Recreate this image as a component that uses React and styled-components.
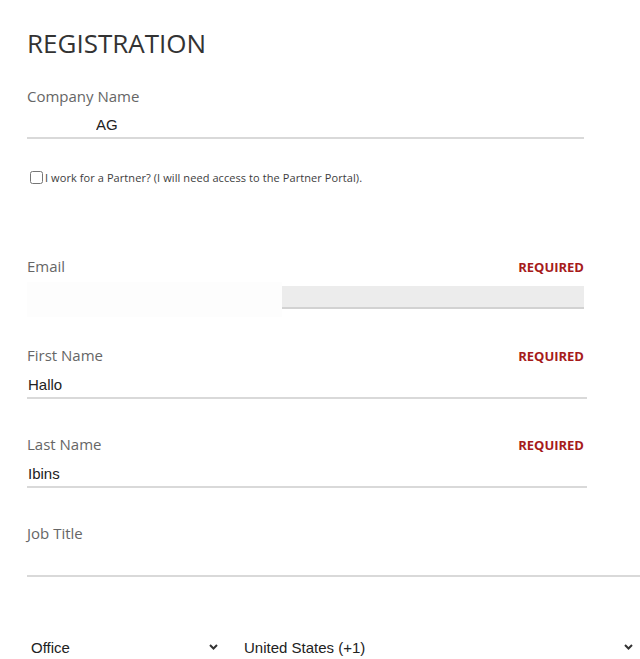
import styled, { createGlobalStyle } from "styled-components";

const GlobalStyle = createGlobalStyle`
  body {
    margin: 0;
    background: #fff;
    overflow: hidden;
  }
`;

const Chevron = () => (
  <svg width="9" height="6" viewBox="0 0 9 6">
    <polyline
      points="1,1 4.5,4.5 8,1"
      fill="none"
      stroke="#333"
      strokeWidth="2"
    />
  </svg>
);

const FormField = ({ label, required, value, width, gap, labelGap = 7, indent, filled, redact }) => {
  return (
    <Field $width={width} $gap={gap}>
      <LabelRow $gap={labelGap}>
        <Label>{label}</Label>
        {required && <Required>REQUIRED</Required>}
      </LabelRow>
      <TextInput
        defaultValue={value}
        $indent={indent}
        $filled={filled}
      />
      {redact && <Redact $width={redact} />}
    </Field>
  );
};

const App = () => {
  return (
    <>
      <GlobalStyle />
      <Page>
        <Title>REGISTRATION</Title>
        <FormField label="Company Name" value="AG" width={557} gap={32} labelGap={6} indent={69} />
        <CheckRow>
          <input type="checkbox" />
          <span>I work for a Partner? (I will need access to the Partner Portal).</span>
        </CheckRow>
        <FormField label="Email" required width={557} gap={36} filled redact={255} />
        <FormField label="First Name" required value="Hallo" width={560} gap={35} />
        <FormField label="Last Name" required value="Ibins" width={560} gap={35} />
        <FormField label="Job Title" width={640} gap={57} />
        <SelectRow>
          <SelectWrap $width={198}>
            <Select defaultValue="office">
              <option value="office">Office</option>
              <option value="mobile">Mobile</option>
            </Select>
            <ChevronBox>
              <Chevron />
            </ChevronBox>
          </SelectWrap>
          <SelectWrap $width={400}>
            <Select defaultValue="us">
              <option value="us">United States (+1)</option>
              <option value="de">Germany (+49)</option>
            </Select>
            <ChevronBox>
              <Chevron />
            </ChevronBox>
          </SelectWrap>
        </SelectRow>
      </Page>
    </>
  );
};

const Page = styled.div`
  padding: 26px 0 0 27px;
  font-family: "Open Sans", "Liberation Sans", sans-serif;
`;

const Title = styled.h1`
  margin: 0 0 25px;
  font-size: 26px;
  font-weight: 400;
  line-height: 35px;
  color: #333;
`;

const Field = styled.div`
  position: relative;
  width: ${(p) => p.$width}px;
  margin-bottom: ${(p) => p.$gap}px;
`;

const LabelRow = styled.div`
  display: flex;
  justify-content: space-between;
  align-items: baseline;
  max-width: 557px;
  height: 20px;
  margin-bottom: ${(p) => p.$gap}px;
`;

const Label = styled.label`
  font-size: 15px;
  line-height: 20px;
  color: #666;
`;

const Required = styled.span`
  font-size: 13px;
  font-weight: 700;
  color: #a61b1b;
`;

const TextInput = styled.input`
  display: block;
  width: 100%;
  box-sizing: border-box;
  height: ${(p) => (p.$filled ? 23 : 27)}px;
  margin-top: ${(p) => (p.$filled ? 10 : 0)}px;
  padding: 0 0 0 ${(p) => p.$indent || 1}px;
  border: none;
  border-bottom: 2px solid ${(p) => (p.$filled ? "#d2d2d2" : "#d9d9d9")};
  background: ${(p) => (p.$filled ? "#ececec" : "#fff")};
  font-family: "Liberation Sans", Arial, sans-serif;
  font-size: 15px;
  color: #222;
  outline: none;
`;

const Redact = styled.div`
  position: absolute;
  left: 0;
  top: 26px;
  width: ${(p) => p.$width}px;
  height: 35px;
  background: #fdfdfd;
`;

const CheckRow = styled.div`
  display: flex;
  align-items: center;
  height: 13px;
  margin: 0 0 72px 3px;
  font-size: 11px;
  letter-spacing: 0.08px;
  color: #3d3d3d;

  input {
    width: 13px;
    height: 13px;
    margin: 0 2px 0 0;
  }
`;

const SelectRow = styled.div`
  display: flex;
  gap: 15px;
`;

const SelectWrap = styled.div`
  position: relative;
  width: ${(p) => p.$width}px;
`;

const Select = styled.select`
  appearance: none;
  width: 100%;
  height: 26px;
  padding: 0 4px;
  border: none;
  background: transparent;
  font-family: "Liberation Sans", Arial, sans-serif;
  font-size: 15px;
  color: #222;
  outline: none;
`;

const ChevronBox = styled.span`
  position: absolute;
  right: 7px;
  top: 10px;
  display: flex;
  pointer-events: none;
`;

export default App;
